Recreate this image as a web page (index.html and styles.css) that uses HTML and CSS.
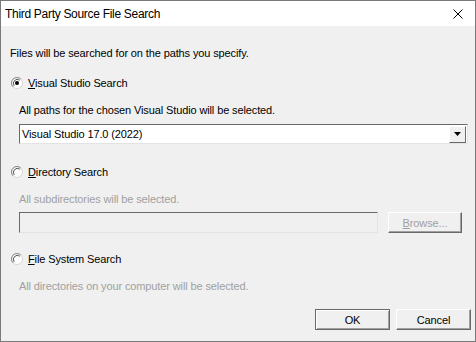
FILE: index.html
```html
<!DOCTYPE html>
<html lang="en">
<head>
    <meta charset="UTF-8">
    <title>Third Party Source File Search</title>
    <link rel="stylesheet" href="styles.css">
</head>
<body>

    <div class="window">
        <!-- Title bar -->
        <div class="titlebar">
            <span class="title">Third Party Source File Search</span>
            <svg class="close" width="10" height="10" viewBox="0 0 10 10">
                <path d="M0.5 0.5 L9.5 9.5 M9.5 0.5 L0.5 9.5" stroke="#000" stroke-width="1" fill="none"/>
            </svg>
        </div>

        <div class="content">
            <p class="intro">Files will be searched for on the paths you specify.</p>

            <!-- Visual Studio search -->
            <label class="radio">
                <svg class="radio-icon" width="12" height="12" viewBox="0 0 12 12">
                    <circle cx="6" cy="6" r="5.5" fill="#fff" stroke="#d4d4d4"/>
                    <path d="M2.1 9.9 A5.5 5.5 0 0 1 9.9 2.1" stroke="#8a8a8a" fill="none"/>
                    <path d="M3.2 8.8 A4 4 0 0 1 8.8 3.2" stroke="#505050" fill="none"/>
                    <circle cx="6" cy="6" r="2" fill="#000"/>
                </svg>
                <span><u>V</u>isual Studio Search</span>
            </label>
            <p class="hint">All paths for the chosen Visual Studio will be selected.</p>
            <div class="combo">
                <span class="combo-text">Visual Studio 17.0 (2022)</span>
                <span class="combo-btn">
                    <svg width="7" height="4" viewBox="0 0 7 4"><path d="M0 0 H7 L3.5 4 Z" fill="#000"/></svg>
                </span>
            </div>

            <!-- Directory search -->
            <label class="radio radio-dir">
                <svg class="radio-icon" width="12" height="12" viewBox="0 0 12 12">
                    <circle cx="6" cy="6" r="5.5" fill="#fff" stroke="#d4d4d4"/>
                    <path d="M2.1 9.9 A5.5 5.5 0 0 1 9.9 2.1" stroke="#8a8a8a" fill="none"/>
                    <path d="M3.2 8.8 A4 4 0 0 1 8.8 3.2" stroke="#505050" fill="none"/>
                </svg>
                <span><u>D</u>irectory Search</span>
            </label>
            <p class="hint disabled">All subdirectories will be selected.</p>
            <div class="path-row">
                <div class="field"></div>
                <button class="btn btn-browse" disabled><u>B</u>rowse...</button>
            </div>

            <!-- File system search -->
            <label class="radio radio-fs">
                <svg class="radio-icon" width="12" height="12" viewBox="0 0 12 12">
                    <circle cx="6" cy="6" r="5.5" fill="#fff" stroke="#d4d4d4"/>
                    <path d="M2.1 9.9 A5.5 5.5 0 0 1 9.9 2.1" stroke="#8a8a8a" fill="none"/>
                    <path d="M3.2 8.8 A4 4 0 0 1 8.8 3.2" stroke="#505050" fill="none"/>
                </svg>
                <span><u>F</u>ile System Search</span>
            </label>
            <p class="hint disabled">All directories on your computer will be selected.</p>

            <div class="actions">
                <button class="btn btn-ok">OK</button>
                <button class="btn">Cancel</button>
            </div>
        </div>
    </div>

</body>
</html>
```

FILE: styles.css
```css
body {
    margin: 0;
    padding: 0;
    background-color: #f0f0f0;
    font-family: 'Liberation Sans', Arial, sans-serif;
    font-size: 11px;
    letter-spacing: -0.12px;
    color: #000;
}

.window {
    box-sizing: border-box;
    width: 476px;
    height: 342px;
    border: 1px solid #7a7a7a;
    background-color: #f0f0f0;
    display: flex;
    flex-direction: column;
}

.titlebar {
    height: 25px;
    background-color: #fff;
    display: flex;
    align-items: center;
    justify-content: space-between;
    padding: 0 12px 0 4px;
}

.title {
    font-size: 12px;
    letter-spacing: -0.3px;
}

.close {
    display: block;
}

.content {
    flex: 1;
    display: flex;
    flex-direction: column;
    padding: 21px 0 0 9px;
}

p {
    margin: 0;
    line-height: 13px;
    height: 13px;
}

.radio {
    display: flex;
    align-items: center;
    height: 13px;
    margin-top: 16px;
    margin-left: 1px;
}

.radio-icon {
    display: block;
    margin-right: 5px;
}

.hint {
    margin: 15px 0 0 9px;
}

.disabled {
    color: #a0a0a0;
}

.combo {
    box-sizing: border-box;
    width: 449px;
    height: 20px;
    margin: 7px 0 0 9px;
    background-color: #fff;
    border-top: 1px solid #696969;
    border-left: 1px solid #696969;
    border-right: 1px solid #e3e3e3;
    border-bottom: 1px solid #e3e3e3;
    display: flex;
    align-items: center;
    justify-content: space-between;
    padding: 0 1px 0 2px;
}

.combo-btn {
    box-sizing: border-box;
    width: 17px;
    height: 17px;
    background-color: #f0f0f0;
    border-top: 1px solid #fff;
    border-left: 1px solid #fff;
    border-right: 1px solid #696969;
    border-bottom: 1px solid #696969;
    display: flex;
    align-items: center;
    justify-content: center;
}

.combo-btn svg {
    display: block;
}

.radio-dir {
    margin-top: 21px;
}

.path-row {
    display: flex;
    margin: 6px 0 0 9px;
    gap: 10px;
    height: 21px;
}

.field {
    box-sizing: border-box;
    width: 359px;
    height: 21px;
    border-top: 1px solid #696969;
    border-left: 1px solid #696969;
    border-right: 1px solid #e3e3e3;
    border-bottom: 1px solid #e3e3e3;
    background-color: #f0f0f0;
}

.btn {
    box-sizing: border-box;
    width: 75px;
    height: 21px;
    font-family: inherit;
    font-size: 11px;
    letter-spacing: inherit;
    color: #000;
    background-color: #f0f0f0;
    border-top: 1px solid #fff;
    border-left: 1px solid #fff;
    border-right: 1px solid #696969;
    border-bottom: 1px solid #696969;
    box-shadow: inset -1px -1px 0 #a0a0a0;
    padding: 0;
}

.btn-browse {
    width: 74px;
    color: #a0a0a0;
}

.radio-fs {
    margin-top: 19px;
}

.actions {
    display: flex;
    justify-content: flex-end;
    gap: 6px;
    margin-top: 16px;
    padding-right: 4px;
}

.btn-ok {
    border: 1px solid #696969;
    box-shadow: inset 1px 1px 0 #fff, inset -1px -1px 0 #a0a0a0;
}
```
